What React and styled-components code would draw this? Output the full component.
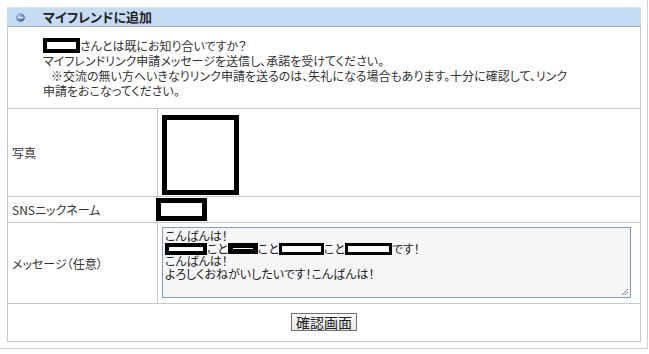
import React from 'react';
import styled, { createGlobalStyle } from 'styled-components';

const GlobalStyle = createGlobalStyle`
    html, body {
        margin: 0;
        padding: 0;
        background: #ffffff;
    }
    body {
        font-family: "Noto Sans CJK JP", "DejaVu Sans", sans-serif;
        font-size: 12px;
        color: #333333;
    }
`;

const App = () => {
    return (
        <React.Fragment>
            <GlobalStyle />
            <Frame>
                <Panel>
                    <Header>
                        <HeaderIcon width='9' height='9' viewBox='0 0 9 9'>
                            <defs>
                                <radialGradient id='ball' cx='35%' cy='30%' r='75%'>
                                    <stop offset='0' stopColor='#a9c4ee' />
                                    <stop offset='1' stopColor='#3d63b0' />
                                </radialGradient>
                            </defs>
                            <circle cx='4.5' cy='4.5' r='4.3' fill='url(#ball)' />
                            <rect x='1.8' y='3.9' width='5.4' height='1.3' fill='#ffffff' />
                        </HeaderIcon>
                        <Title>マイフレンドに追加</Title>
                    </Header>
                    <Intro>
                        <Line>
                            <Redaction w={37} h={15} b={4} />
                            さんとは既にお知り合いですか？
                        </Line>
                        <Line>マイフレンドリンク申請メッセージを送信し、承諾を受けてください。</Line>
                        <Line indent>※交流の無い方へいきなりリンク申請を送るのは、失礼になる場合もあります。十分に確認して、リンク</Line>
                        <Line>申請をおこなってください。</Line>
                    </Intro>
                    <Row h={88}>
                        <Label>写真</Label>
                        <Value pad={4} top={6}>
                            <Redaction w={77} h={80} b={5} />
                        </Value>
                    </Row>
                    <Row h={26}>
                        <Label>SNSニックネーム</Label>
                        <Value pad={-2} top={1}>
                            <Redaction w={51} h={23} b={5} />
                        </Value>
                    </Row>
                    <Row h={81}>
                        <Label>メッセージ（任意）</Label>
                        <Value pad={4} top={4}>
                            <MessageBox>
                                <MsgLine>こんばんは！</MsgLine>
                                <MsgLine>
                                    <Redaction w={42} h={12} b={4} />
                                    こと
                                    <Redaction w={30} h={11} b={5} />
                                    こと
                                    <Redaction w={45} h={12} b={3} />
                                    こと
                                    <Redaction w={47} h={12} b={3} />
                                    です！
                                </MsgLine>
                                <MsgLine>こんばんは！</MsgLine>
                                <MsgLine>よろしくおねがいしたいです！こんばんは！</MsgLine>
                                <Grip width='9' height='9' viewBox='0 0 9 9'>
                                    <path d='M8 2 L2 8 M8 5 L5 8' stroke='#808080' strokeWidth='1' />
                                </Grip>
                            </MessageBox>
                        </Value>
                    </Row>
                    <SubmitRow>
                        <Button type='button'>確認画面</Button>
                    </SubmitRow>
                </Panel>
            </Frame>
        </React.Fragment>
    );
};

const Frame = styled.div`
    width: 648px;
    height: 349px;
    box-sizing: border-box;
    padding: 7px 8px 0 7px;
    border-right: 1px solid #d0d0d0;
    border-bottom: 1px solid #d0d0d0;
`;

const Panel = styled.div`
    width: 634px;
    box-sizing: border-box;
    border-left: 1px solid #c8c8c8;
    border-right: 1px solid #c8c8c8;
    border-bottom: 1px solid #c8c8c8;
`;

const Header = styled.div`
    display: flex;
    align-items: center;
    height: 20px;
    box-sizing: border-box;
    margin: 0 -1px;
    background: #c6dcf3;
    border-top: 1px solid #d6e2ee;
    border-bottom: 1px solid #a9b4bf;
    padding-left: 9px;
`;

const HeaderIcon = styled.svg`
    display: block;
    flex: none;
`;

const Title = styled.div`
    margin-left: 18px;
    font-size: 13px;
    font-weight: bold;
    color: #222222;
    font-feature-settings: 'palt';
    line-height: 18px;
`;

const Intro = styled.div`
    height: 81px;
    box-sizing: border-box;
    padding: 11px 0 0 35px;
    font-feature-settings: 'palt';
`;

const Line = styled.div`
    display: flex;
    align-items: center;
    height: 15px;
    white-space: nowrap;
    line-height: 15px;
    padding-left: ${(props) => (props.indent ? '8px' : '0')};
`;

const Redaction = styled.span`
    display: inline-block;
    flex: none;
    vertical-align: middle;
    width: ${(props) => props.w}px;
    height: ${(props) => props.h}px;
    box-sizing: border-box;
    border: ${(props) => props.b}px solid #000000;
    background: #ffffff;
`;

const Row = styled.div`
    display: grid;
    grid-template-columns: 150px 1fr;
    height: ${(props) => props.h}px;
    box-sizing: border-box;
    border-top: 1px solid #c8c8c8;
`;

const Label = styled.div`
    display: flex;
    align-items: center;
    padding-left: 4px;
    border-right: 1px solid #c8c8c8;
    font-size: 12px;
    font-feature-settings: 'palt';
    color: #333333;
`;

const Value = styled.div`
    display: flex;
    align-items: flex-start;
    padding-left: ${(props) => props.pad}px;
    padding-top: ${(props) => props.top}px;
    margin-left: ${(props) => (props.pad < 0 ? `${props.pad}px` : '0')};
`;

const MessageBox = styled.div`
    position: relative;
    width: 469px;
    height: 71px;
    box-sizing: border-box;
    border: 1px solid #7f9db9;
    background: #f6f6f7;
    padding: 2px 2px;
    font-size: 12px;
    font-feature-settings: 'palt';
    color: #222222;
`;

const MsgLine = styled.div`
    display: flex;
    align-items: center;
    height: 12.5px;
    line-height: 12.5px;
    white-space: nowrap;
`;

const Grip = styled.svg`
    position: absolute;
    right: 1px;
    bottom: 1px;
`;

const SubmitRow = styled.div`
    display: flex;
    justify-content: center;
    align-items: flex-start;
    height: 38px;
    box-sizing: border-box;
    padding-top: 9px;
    border-top: 1px solid #c8c8c8;
`;

const Button = styled.button`
    width: 66px;
    height: 18px;
    padding: 0;
    box-sizing: border-box;
    border: 1px solid #707070;
    background: linear-gradient(#fbfbfb, #e6e6e6);
    font-family: "Noto Sans CJK JP", sans-serif;
    font-size: 14px;
    line-height: 16px;
    color: #222222;
`;

export default App;
